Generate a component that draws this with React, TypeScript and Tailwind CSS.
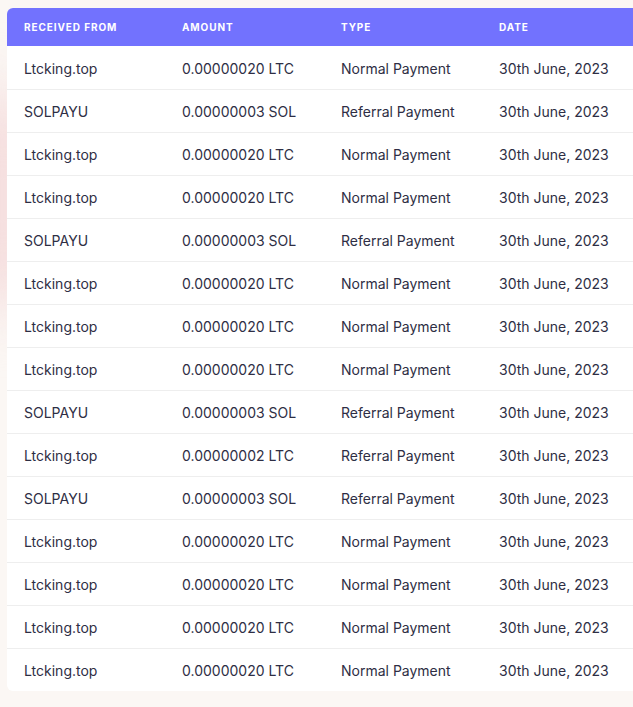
const rows = [
  ["Ltcking.top", "0.00000020 LTC", "Normal Payment"],
  ["SOLPAYU", "0.00000003 SOL", "Referral Payment"],
  ["Ltcking.top", "0.00000020 LTC", "Normal Payment"],
  ["Ltcking.top", "0.00000020 LTC", "Normal Payment"],
  ["SOLPAYU", "0.00000003 SOL", "Referral Payment"],
  ["Ltcking.top", "0.00000020 LTC", "Normal Payment"],
  ["Ltcking.top", "0.00000020 LTC", "Normal Payment"],
  ["Ltcking.top", "0.00000020 LTC", "Normal Payment"],
  ["SOLPAYU", "0.00000003 SOL", "Referral Payment"],
  ["Ltcking.top", "0.00000002 LTC", "Referral Payment"],
  ["SOLPAYU", "0.00000003 SOL", "Referral Payment"],
  ["Ltcking.top", "0.00000020 LTC", "Normal Payment"],
  ["Ltcking.top", "0.00000020 LTC", "Normal Payment"],
  ["Ltcking.top", "0.00000020 LTC", "Normal Payment"],
  ["Ltcking.top", "0.00000020 LTC", "Normal Payment"],
];

const App = () => {
  return (
    <div className="relative min-h-[707px] overflow-hidden bg-[#fbf7f4] pl-[7px] pt-[8px] font-['Inter',sans-serif]">
      {/* soft pink glow at left edge */}
      <div className="absolute -left-[60px] top-[90px] h-[220px] w-[110px] rounded-full bg-[#f5dede] blur-[30px]"></div>

      <div className="relative w-[640px] overflow-hidden rounded-md bg-white">
        <table className="w-[634px] table-fixed border-collapse text-left">
          <thead>
            <tr className="h-[38px] bg-[#7272fe] text-[10px] font-black uppercase tracking-[0.09em] text-white">
              <th className="w-[158px] pl-[17px]">Received From</th>
              <th className="w-[159px] pl-[17px]">Amount</th>
              <th className="w-[158px] pl-[17px]">Type</th>
              <th className="w-[159px] pl-[17px]">Date</th>
            </tr>
          </thead>
          <tbody className="text-[14px] text-[#2e2e44]">
            {rows.map((r, i) => (
              <tr
                key={i}
                className={`h-[43px] ${i < rows.length - 1 ? "border-b border-[#eeeeee]" : ""}`}
              >
                <td className="pl-[17px] pt-[2px]">{r[0]}</td>
                <td className="pl-[17px] pt-[2px]">{r[1]}</td>
                <td className="pl-[17px] pt-[2px]">{r[2]}</td>
                <td className="whitespace-nowrap pl-[17px] pt-[2px]">30th June, 2023</td>
              </tr>
            ))}
          </tbody>
        </table>
      </div>
    </div>
  );
};

export default App;
